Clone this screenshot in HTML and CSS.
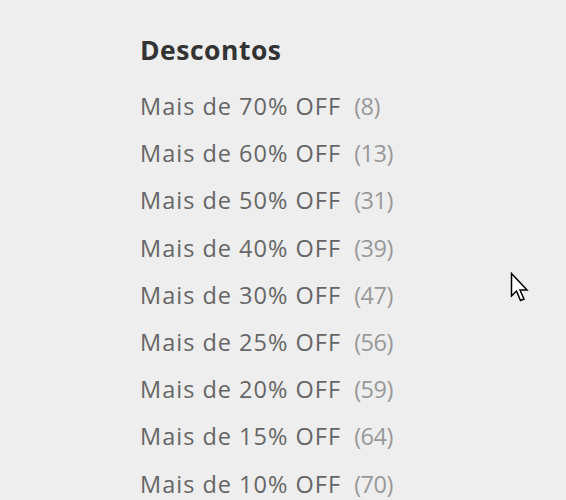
FILE: index.html
```html
<!DOCTYPE html>
<html lang="pt-BR">
<head>
    <meta charset="UTF-8">
    <meta name="viewport" content="width=device-width, initial-scale=1.0">
    <title>Descontos</title>
    <link rel="stylesheet" href="styles.css">
</head>
<body>
    <div class="filter">
        <h3 class="filter-title">Descontos</h3>
        <ul class="filter-list">
            <li><a href="#">Mais de 70% OFF</a> <span class="count">(8)</span></li>
            <li><a href="#">Mais de 60% OFF</a> <span class="count">(13)</span></li>
            <li><a href="#">Mais de 50% OFF</a> <span class="count">(31)</span></li>
            <li><a href="#">Mais de 40% OFF</a> <span class="count">(39)</span></li>
            <li><a href="#">Mais de 30% OFF</a> <span class="count">(47)</span></li>
            <li><a href="#">Mais de 25% OFF</a> <span class="count">(56)</span></li>
            <li><a href="#">Mais de 20% OFF</a> <span class="count">(59)</span></li>
            <li><a href="#">Mais de 15% OFF</a> <span class="count">(64)</span></li>
            <li><a href="#">Mais de 10% OFF</a> <span class="count">(70)</span></li>
        </ul>
    </div>

    <!-- cursor do mouse -->
    <svg class="cursor" width="22" height="32" viewBox="0 0 22 32">
        <path d="M1.5 1.5 L1.5 24 L6.5 19 L10.5 28.5 L14 27 L10 18 L17 18 Z" fill="#fff" stroke="#000" stroke-width="1.5" stroke-linejoin="miter"/>
    </svg>
</body>
</html>
```

FILE: styles.css
```css
body {
    margin: 0;
    background-color: #eeeeee;
    font-family: 'Open Sans', sans-serif;
    height: 500px;
    overflow: hidden;
    position: relative;
}
.filter {
    padding: 34px 0 0 140px;
}
.filter-title {
    margin: 0 0 17px;
    font-size: 26.5px;
    font-weight: bold;
    letter-spacing: 0.5px;
    color: #333;
    line-height: 32px;
}
.filter-list {
    list-style: none;
    margin: 0;
    padding: 0;
}
.filter-list li {
    font-size: 23.5px;
    letter-spacing: 1px;
    line-height: 47.2px;
    white-space: nowrap;
}
.filter-list a {
    color: #666;
    text-decoration: none;
}
.count {
    color: #999;
    letter-spacing: -0.5px;
    margin-left: 6px;
}
.cursor {
    position: absolute;
    left: 510px;
    top: 272px;
}
```
